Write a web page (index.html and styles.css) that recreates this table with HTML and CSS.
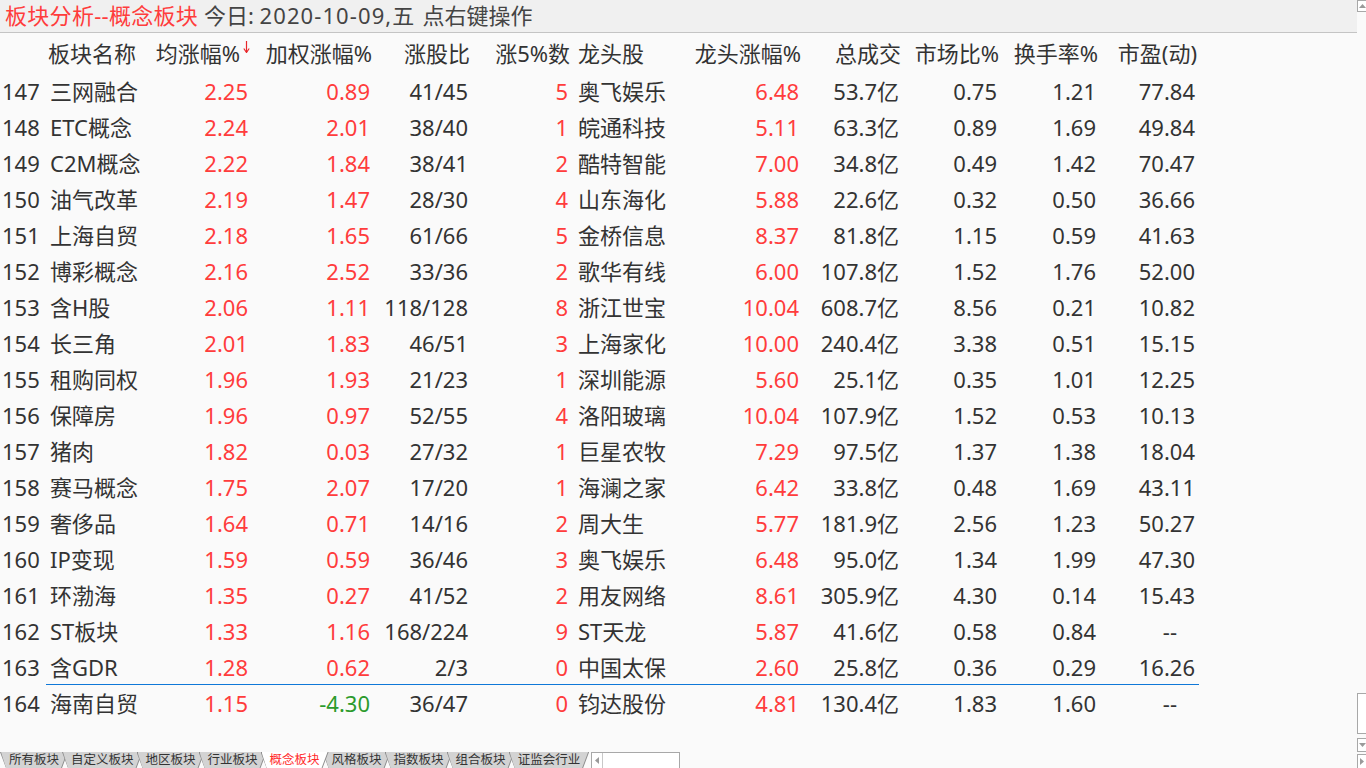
FILE: index.html
```html
<!DOCTYPE html>
<html lang="zh-CN">
<head>
<meta charset="utf-8">
<title>板块分析--概念板块</title>
<link rel="stylesheet" href="styles.css">
</head>
<body>
<div class="app">
  <div class="main">
    <div class="titlebar"><span class="red">板块分析--概念板块</span> 今日: <span class="date">2020-10-09,</span>五<span class="hint">点右键操作</span></div>
    <div class="table">
      <div class="row head">
        <span class="l"></span><span class="l">板块名称</span><span class="r sorted">均涨幅%<svg class="arrow" width="7" height="12" viewBox="0 0 7 12"><path d="M3.5 0V11" stroke="#e8262a" stroke-width="1.2"/><path d="M0.8 7.5L3.5 11.5L6.2 7.5" fill="none" stroke="#e8262a" stroke-width="1.2"/></svg></span><span class="r">加权涨幅%</span><span class="r">涨股比</span><span class="r">涨5%数</span><span class="l lead">龙头股</span><span class="r">龙头涨幅%</span><span class="r">总成交</span><span class="r">市场比%</span><span class="r">换手率%</span><span class="r last">市盈(动)</span>
      </div>
      <div class="row"><span class="l num">147</span><span class="l">三网融合</span><span class="r up">2.25</span><span class="r up">0.89</span><span class="r">41/45</span><span class="r up">5</span><span class="l lead">奥飞娱乐</span><span class="r up">6.48</span><span class="r">53.7亿</span><span class="r">0.75</span><span class="r">1.21</span><span class="r last">77.84</span></div>
      <div class="row"><span class="l num">148</span><span class="l">ETC概念</span><span class="r up">2.24</span><span class="r up">2.01</span><span class="r">38/40</span><span class="r up">1</span><span class="l lead">皖通科技</span><span class="r up">5.11</span><span class="r">63.3亿</span><span class="r">0.89</span><span class="r">1.69</span><span class="r last">49.84</span></div>
      <div class="row"><span class="l num">149</span><span class="l">C2M概念</span><span class="r up">2.22</span><span class="r up">1.84</span><span class="r">38/41</span><span class="r up">2</span><span class="l lead">酷特智能</span><span class="r up">7.00</span><span class="r">34.8亿</span><span class="r">0.49</span><span class="r">1.42</span><span class="r last">70.47</span></div>
      <div class="row"><span class="l num">150</span><span class="l">油气改革</span><span class="r up">2.19</span><span class="r up">1.47</span><span class="r">28/30</span><span class="r up">4</span><span class="l lead">山东海化</span><span class="r up">5.88</span><span class="r">22.6亿</span><span class="r">0.32</span><span class="r">0.50</span><span class="r last">36.66</span></div>
      <div class="row"><span class="l num">151</span><span class="l">上海自贸</span><span class="r up">2.18</span><span class="r up">1.65</span><span class="r">61/66</span><span class="r up">5</span><span class="l lead">金桥信息</span><span class="r up">8.37</span><span class="r">81.8亿</span><span class="r">1.15</span><span class="r">0.59</span><span class="r last">41.63</span></div>
      <div class="row"><span class="l num">152</span><span class="l">博彩概念</span><span class="r up">2.16</span><span class="r up">2.52</span><span class="r">33/36</span><span class="r up">2</span><span class="l lead">歌华有线</span><span class="r up">6.00</span><span class="r">107.8亿</span><span class="r">1.52</span><span class="r">1.76</span><span class="r last">52.00</span></div>
      <div class="row"><span class="l num">153</span><span class="l">含H股</span><span class="r up">2.06</span><span class="r up">1.11</span><span class="r">118/128</span><span class="r up">8</span><span class="l lead">浙江世宝</span><span class="r up">10.04</span><span class="r">608.7亿</span><span class="r">8.56</span><span class="r">0.21</span><span class="r last">10.82</span></div>
      <div class="row"><span class="l num">154</span><span class="l">长三角</span><span class="r up">2.01</span><span class="r up">1.83</span><span class="r">46/51</span><span class="r up">3</span><span class="l lead">上海家化</span><span class="r up">10.00</span><span class="r">240.4亿</span><span class="r">3.38</span><span class="r">0.51</span><span class="r last">15.15</span></div>
      <div class="row"><span class="l num">155</span><span class="l">租购同权</span><span class="r up">1.96</span><span class="r up">1.93</span><span class="r">21/23</span><span class="r up">1</span><span class="l lead">深圳能源</span><span class="r up">5.60</span><span class="r">25.1亿</span><span class="r">0.35</span><span class="r">1.01</span><span class="r last">12.25</span></div>
      <div class="row"><span class="l num">156</span><span class="l">保障房</span><span class="r up">1.96</span><span class="r up">0.97</span><span class="r">52/55</span><span class="r up">4</span><span class="l lead">洛阳玻璃</span><span class="r up">10.04</span><span class="r">107.9亿</span><span class="r">1.52</span><span class="r">0.53</span><span class="r last">10.13</span></div>
      <div class="row"><span class="l num">157</span><span class="l">猪肉</span><span class="r up">1.82</span><span class="r up">0.03</span><span class="r">27/32</span><span class="r up">1</span><span class="l lead">巨星农牧</span><span class="r up">7.29</span><span class="r">97.5亿</span><span class="r">1.37</span><span class="r">1.38</span><span class="r last">18.04</span></div>
      <div class="row"><span class="l num">158</span><span class="l">赛马概念</span><span class="r up">1.75</span><span class="r up">2.07</span><span class="r">17/20</span><span class="r up">1</span><span class="l lead">海澜之家</span><span class="r up">6.42</span><span class="r">33.8亿</span><span class="r">0.48</span><span class="r">1.69</span><span class="r last">43.11</span></div>
      <div class="row"><span class="l num">159</span><span class="l">奢侈品</span><span class="r up">1.64</span><span class="r up">0.71</span><span class="r">14/16</span><span class="r up">2</span><span class="l lead">周大生</span><span class="r up">5.77</span><span class="r">181.9亿</span><span class="r">2.56</span><span class="r">1.23</span><span class="r last">50.27</span></div>
      <div class="row"><span class="l num">160</span><span class="l">IP变现</span><span class="r up">1.59</span><span class="r up">0.59</span><span class="r">36/46</span><span class="r up">3</span><span class="l lead">奥飞娱乐</span><span class="r up">6.48</span><span class="r">95.0亿</span><span class="r">1.34</span><span class="r">1.99</span><span class="r last">47.30</span></div>
      <div class="row"><span class="l num">161</span><span class="l">环渤海</span><span class="r up">1.35</span><span class="r up">0.27</span><span class="r">41/52</span><span class="r up">2</span><span class="l lead">用友网络</span><span class="r up">8.61</span><span class="r">305.9亿</span><span class="r">4.30</span><span class="r">0.14</span><span class="r last">15.43</span></div>
      <div class="row"><span class="l num">162</span><span class="l">ST板块</span><span class="r up">1.33</span><span class="r up">1.16</span><span class="r">168/224</span><span class="r up">9</span><span class="l lead">ST天龙</span><span class="r up">5.87</span><span class="r">41.6亿</span><span class="r">0.58</span><span class="r">0.84</span><span class="r last na">--</span></div>
      <div class="row sel"><span class="l num">163</span><span class="l">含GDR</span><span class="r up">1.28</span><span class="r up">0.62</span><span class="r">2/3</span><span class="r up">0</span><span class="l lead">中国太保</span><span class="r up">2.60</span><span class="r">25.8亿</span><span class="r">0.36</span><span class="r">0.29</span><span class="r last">16.26</span></div>
      <div class="row"><span class="l num">164</span><span class="l">海南自贸</span><span class="r up">1.15</span><span class="r down">-4.30</span><span class="r">36/47</span><span class="r up">0</span><span class="l lead">钧达股份</span><span class="r up">4.81</span><span class="r">130.4亿</span><span class="r">1.83</span><span class="r">1.60</span><span class="r last na">--</span></div>
    </div>
    <div class="bottom">
      <div class="tabs">
        <span class="tab">所有板块</span>
        <span class="tab">自定义板块</span>
        <span class="tab">地区板块</span>
        <span class="tab">行业板块</span>
        <span class="tab active">概念板块</span>
        <span class="tab">风格板块</span>
        <span class="tab">指数板块</span>
        <span class="tab">组合板块</span>
        <span class="tab">证监会行业</span>
      </div>
      <div class="hscroll"><span class="hbtn"><svg width="4" height="7" viewBox="0 0 4 7"><path d="M4 0V7L0 3.5Z" fill="#9a9a9a"/></svg></span></div>
    </div>
  </div>
  <div class="vscroll">
    <span class="vbtn"><svg width="7" height="4" viewBox="0 0 7 4"><path d="M0 4H7L3.5 0Z" fill="#9a9a9a"/></svg></span>
    <span class="vthumb"></span>
    <span class="vbtn dn"><svg width="7" height="4" viewBox="0 0 7 4"><path d="M0 0H7L3.5 4Z" fill="#9a9a9a"/></svg></span>
    <span class="vbtn rt"><svg width="4" height="7" viewBox="0 0 4 7"><path d="M0 0V7L4 3.5Z" fill="#9a9a9a"/></svg></span>
  </div>
</div>
</body>
</html>
```

FILE: styles.css
```css
html, body {
  margin: 0;
  padding: 0;
}
body {
  background: #fafafa;
  font-family: "Noto Sans", "Noto Sans CJK SC", sans-serif;
  color: #333333;
  width: 1366px;
  height: 768px;
  overflow: hidden;
}
.app {
  display: flex;
  height: 768px;
}
.main {
  flex: 1;
  display: flex;
  flex-direction: column;
  min-width: 0;
}
.titlebar {
  height: 32px;
  line-height: 31px;
  background: #f0f0f0;
  border-bottom: 1px solid #c4c4c4;
  padding-left: 5px;
  font-size: 22px;
  color: #444444;
  white-space: nowrap;
}
.titlebar .red {
  color: #ff3c3c;
  letter-spacing: 0.3px;
}
.titlebar .date {
  letter-spacing: 1.1px;
}
.titlebar .hint {
  margin-left: 8px;
}
.table {
  padding-top: 3px;
}
.row {
  display: grid;
  grid-template-columns: 46px 104px 98px 122px 98px 100px 112px 119px 100px 98px 99px 103px;
  height: 36px;
  line-height: 36px;
  font-size: 22px;
  white-space: nowrap;
}
.row.head {
  height: 37px;
  line-height: 35px;
}
.row > span {
  display: block;
}
.row .l {
  text-align: left;
}
.row .r {
  text-align: right;
}
.row .num {
  padding-left: 2px;
}
.row > span:nth-child(2) {
  padding-left: 4px;
}
.row.head > span:nth-child(2) {
  padding-left: 2px;
}
.row .lead {
  padding-left: 10px;
}
.row .last {
  padding-right: 4px;
}
.row.head .r {
  margin-right: -2px;
}
.row .na {
  padding-right: 22px;
}
.up {
  color: #ff3c3c;
}
.down {
  color: #2c9a2c;
}
.arrow {
  vertical-align: top;
  margin-top: 5px;
  margin-left: 3px;
}
.row.sel > span:not(:first-child) {
  height: 35px;
  border-bottom: 1px solid #0f78d8;
}
.bottom {
  margin-top: auto;
  display: flex;
  align-items: flex-end;
  height: 17px;
}
.tabs {
  display: flex;
  height: 16px;
}
.tab {
  position: relative;
  isolation: isolate;
  height: 16px;
  line-height: 16px;
  font-size: 12.5px;
  padding: 0 9px;
  margin-right: -6px;
  color: #333333;
  background: #8c8c8c;
  clip-path: polygon(0 0, 100% 0, calc(100% - 6px) 100%, 6px 100%);
}
.tab::before {
  content: "";
  position: absolute;
  top: 0;
  bottom: 0;
  left: 1px;
  right: 0;
  background: #d3d3d3;
  clip-path: polygon(0 0, calc(100% - 1px) 0, calc(100% - 7px) 100%, 5px 100%);
  z-index: -1;
}
.tab.active {
  color: #ff2a2a;
  z-index: 2;
}
.tab.active::before {
  background: #ffffff;
}
.hscroll {
  margin-left: 8px;
  width: 87px;
  height: 15px;
  border: 1px solid #a8a8a8;
  border-bottom: none;
  background: #ffffff;
  display: flex;
}
.hbtn {
  width: 10px;
  border-right: 1px solid #c8c8c8;
  display: flex;
  align-items: center;
  justify-content: center;
}
.vscroll {
  width: 9px;
  display: flex;
  flex-direction: column;
  background: #fafafa;
}
.vbtn {
  height: 10px;
  border: 1px solid #a8a8a8;
  border-right: none;
  background: #ffffff;
  display: flex;
  align-items: center;
  justify-content: center;
}
.vthumb {
  margin-top: auto;
  height: 39px;
  border: 1px solid #a8a8a8;
  border-right: none;
  background: #ffffff;
}
.vbtn.dn {
  margin-top: 4px;
  height: 12px;
}
.vbtn.rt {
  margin-top: 2px;
  height: 13px;
  border-bottom: none;
}
```
